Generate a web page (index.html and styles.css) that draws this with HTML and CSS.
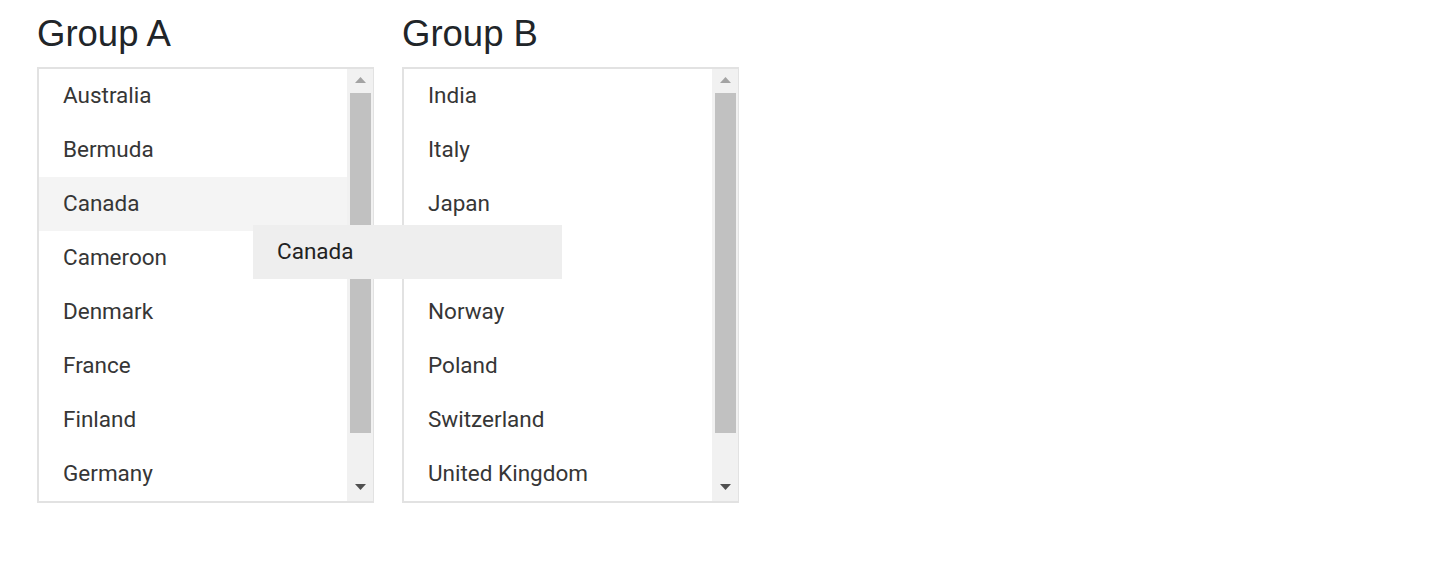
FILE: index.html
```html
<!DOCTYPE html>
<html>
<head>
<meta charset="utf-8">
<link rel="stylesheet" href="styles.css">
</head>
<body>
<div class="page">
  <div class="group">
    <h2 class="title">Group A</h2>
    <div class="box">
      <ul class="list">
        <li class="item">Australia</li>
        <li class="item">Bermuda</li>
        <li class="item hover">Canada</li>
        <li class="item">Cameroon</li>
        <li class="item">Denmark</li>
        <li class="item">France</li>
        <li class="item">Finland</li>
        <li class="item">Germany</li>
      </ul>
      <div class="scrollbar">
        <div class="btn btn-up"><svg width="11" height="6" viewBox="0 0 11 6"><polygon points="0,6 11,6 5.5,0" fill="#a3a3a3"/></svg></div>
        <div class="thumb"></div>
        <div class="spacer"></div>
        <div class="btn btn-down"><svg width="11" height="6" viewBox="0 0 11 6"><polygon points="0,0 11,0 5.5,6" fill="#505050"/></svg></div>
      </div>
    </div>
  </div>
  <div class="group">
    <h2 class="title">Group B</h2>
    <div class="box">
      <ul class="list">
        <li class="item">India</li>
        <li class="item">Italy</li>
        <li class="item">Japan</li>
        <li class="item">Netherlands</li>
        <li class="item">Norway</li>
        <li class="item">Poland</li>
        <li class="item">Switzerland</li>
        <li class="item">United Kingdom</li>
      </ul>
      <div class="scrollbar">
        <div class="btn btn-up"><svg width="11" height="6" viewBox="0 0 11 6"><polygon points="0,6 11,6 5.5,0" fill="#a3a3a3"/></svg></div>
        <div class="thumb"></div>
        <div class="spacer"></div>
        <div class="btn btn-down"><svg width="11" height="6" viewBox="0 0 11 6"><polygon points="0,0 11,0 5.5,6" fill="#505050"/></svg></div>
      </div>
    </div>
  </div>
  <div class="ghost">Canada</div>
</div>
</body>
</html>
```
FILE: styles.css
```css
html, body {
  margin: 0;
  padding: 0;
  background: #ffffff;
}
.page {
  position: relative;
  display: flex;
  gap: 28px;
  padding: 12px 0 0 37px;
  height: 573px;
}
.group {
  display: flex;
  flex-direction: column;
  width: 337px;
}
.title {
  margin: 0 0 12px 0;
  font-family: "Liberation Sans", Arial, sans-serif;
  font-weight: normal;
  font-size: 36.5px;
  line-height: 43px;
  color: #212529;
}
.box {
  display: flex;
  box-sizing: border-box;
  width: 337px;
  height: 436px;
  border: 2px solid #e2e2e2;
  border-right-width: 1px;
}
.list {
  list-style: none;
  margin: 0;
  padding: 0;
  width: 308px;
  flex: none;
}
.item {
  box-sizing: border-box;
  height: 54px;
  padding: 0 0 2px 24px;
  display: flex;
  align-items: center;
  font-family: Roboto, "Noto Sans", sans-serif;
  font-size: 22.5px;
  color: #363636;
}
.item.hover {
  background: #f4f4f4;
}
.scrollbar {
  flex: 1;
  display: flex;
  flex-direction: column;
  background: #f1f1f1;
}
.btn {
  height: 24px;
  display: flex;
  justify-content: center;
  box-sizing: border-box;
  padding-left: 1px;
}
.btn-up {
  padding-top: 8px;
}
.btn-down {
  padding-top: 7px;
}
.thumb {
  width: 21px;
  margin-left: 3px;
  height: 340px;
  background: #c1c1c1;
}
.spacer {
  flex: 1;
}
.ghost {
  position: absolute;
  left: 253px;
  top: 225px;
  width: 309px;
  height: 54px;
  box-sizing: border-box;
  padding: 0 0 2px 24px;
  display: flex;
  align-items: center;
  background: #eeeeee;
  font-family: Roboto, "Noto Sans", sans-serif;
  font-size: 22.5px;
  color: #222222;
}
```
